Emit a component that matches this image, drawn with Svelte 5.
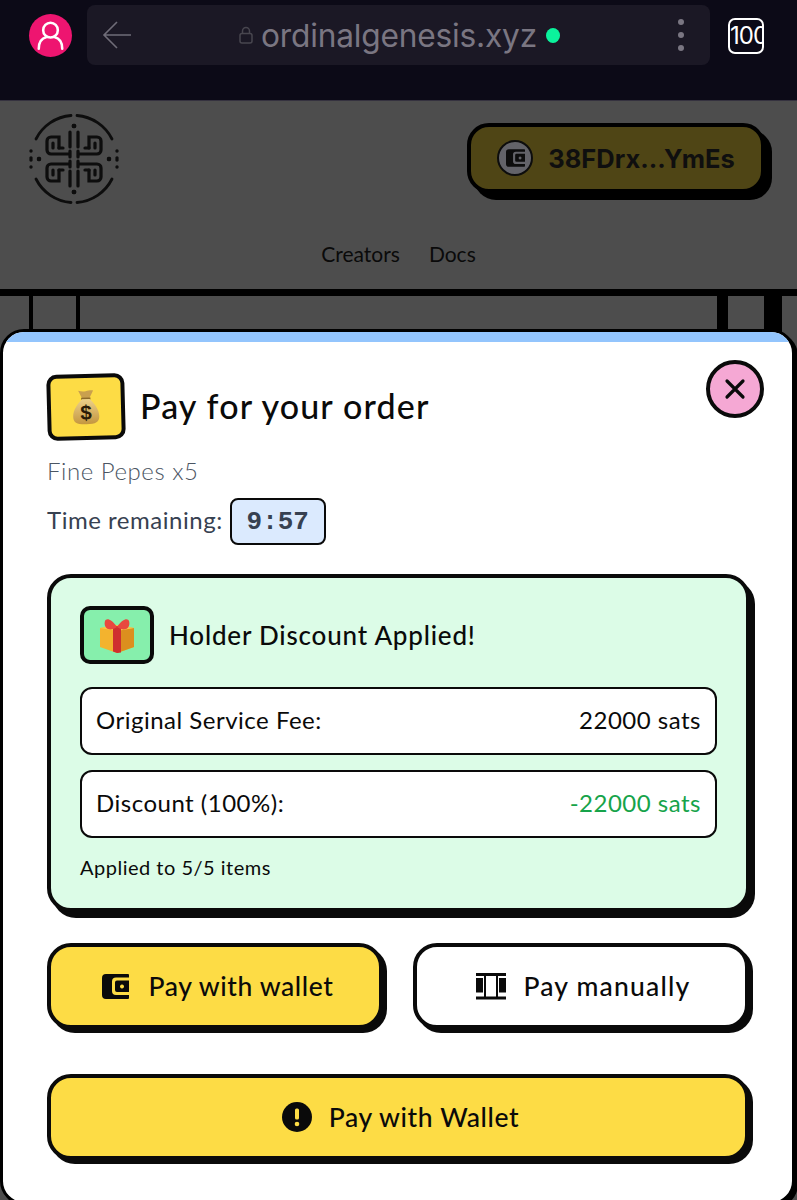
<script>
  const rows = [
    { label: 'Original Service Fee:', value: '22000 sats', green: false },
    { label: 'Discount (100%):', value: '-22000 sats', green: true }
  ];
</script>

<div class="screen">
  <header class="browser">
    <div class="avatar">
      <svg viewBox="0 0 44 44" width="44" height="44" fill="none" stroke="#fff" stroke-width="2.6" stroke-linecap="round">
        <circle cx="22" cy="16" r="7.500"/>
        <path d="M10 35c0-8 4-11 8-12M34 35c0-8-4-11-8-12"/>
      </svg>
    </div>
    <div class="urlbar">
      <svg class="back" viewBox="0 0 30 28" width="30" height="28" fill="none" stroke="#6f6c78" stroke-width="1.6">
        <path d="M15 1 2 14l13 13M2 14h27"/>
      </svg>
      <div class="url">
        <svg viewBox="0 0 14 18" width="14" height="18" fill="none" stroke="#48464f" stroke-width="1.5">
          <rect x="1" y="7.500" width="12" height="9.500" rx="2"/>
          <path d="M3.500 7.500V5a3.500 3.500 0 0 1 7 0v2.500"/>
        </svg>
        <span class="domain">ordinalgenesis.xyz</span>
        <span class="live"></span>
      </div>
      <div class="dots"><i></i><i></i><i></i></div>
    </div>
    <div class="tabs">100</div>
  </header>

  <section class="site">
    <div class="site-top">
      <svg class="logo" viewBox="-50 -50 100 100" width="100" height="100" fill="none" stroke="#0d0d0d" stroke-width="3.200" stroke-linecap="round">
        <defs>
          <g id="quad">
            <path d="M-15-11V-22H-23a4 4 0 0 0-4 4V-9a4 4 0 0 0 4 4H-5"/>
            <path d="M-21-16V-11"/>
            <path d="M-4-27V-12M-4-8V-2"/>
            <path d="M-15-11h4"/>
            <path d="M-38-20A43 43 0 0 1-3-43.500" stroke-width="2.800"/>
            <circle cx="0" cy="-33" r="2.300" fill="#0d0d0d" stroke="none"/>
            <circle cx="-43" cy="-8" r="1.700" fill="#0d0d0d" stroke="none"/>
            <circle cx="-43" cy="-1" r="1.700" fill="#0d0d0d" stroke="none"/>
            <circle cx="-35" cy="0" r="2.200" fill="#0d0d0d" stroke="none"/>
          </g>
        </defs>
        <use href="#quad"/>
        <use href="#quad" transform="scale(-1 1)"/>
        <use href="#quad" transform="scale(1 -1)"/>
        <use href="#quad" transform="scale(-1 -1)"/>
      </svg>
      <button class="connect">
        <span class="connect-icon">
          <svg viewBox="0 0 27 25" width="19" height="18"><path fill="#0d0d0d" fill-rule="evenodd" d="M4 0H26a1 1 0 0 1 1 1V3.500H14a4 4 0 0 0-4 4V17a4 4 0 0 0 4 4H27V24a1 1 0 0 1-1 1H4a4 4 0 0 1-4-4V4a4 4 0 0 1 4-4ZM15 6.500H27V18H15a2 2 0 0 1-2-2V8.500a2 2 0 0 1 2-2ZM20 10.500a2 2 0 1 0 .01 0Z"/></svg>
        </span>
        38FDrx...YmEs
      </button>
    </div>
    <nav class="nav"><span>Creators</span><span>Docs</span></nav>
  </section>

  <div class="rule"></div>
  <div class="behind">
    <div class="behind-left"><i></i><i></i></div>
    <div class="behind-right"><i class="a"></i><i class="b"></i></div>
  </div>

  <div class="modal">
    <div class="strip"></div>
    <button class="close" aria-label="Close">
      <svg viewBox="0 0 24 24" width="24" height="24" fill="none" stroke="#0a0a0a" stroke-width="3.200" stroke-linecap="round"><path d="M4 4l16 16M20 4 4 20"/></svg>
    </button>
    <div class="content">
      <div class="title-row">
        <div class="emoji-box money">
          <svg viewBox="0 0 30 38" width="28" height="36">
            <defs>
              <linearGradient id="bag" x1="0" y1="0" x2="0" y2="1"><stop offset="0" stop-color="#ecd08a"/><stop offset="1" stop-color="#c4963f"/></linearGradient>
            </defs>
            <path fill="#c9a04e" d="M7 1.500c3 .6 5 1.300 8 .6 3-.7 6-1.300 8-.6l-4 8h-8Z"/>
            <path fill="#8c6a2a" d="M10 9h10v2H10Z"/>
            <path fill="url(#bag)" d="M11 10.500h8c4 3.500 10 11 10 18.500 0 6.500-4 8.500-14 8.500S1 35.500 1 29c0-7.500 6-15 10-18.500Z"/>
            <text x="15" y="32.500" text-anchor="middle" class="dollar">$</text>
          </svg>
        </div>
        <h1>Pay for your order</h1>
      </div>
      <p class="sub">Fine Pepes x5</p>
      <div class="time">
        <span class="time-label">Time remaining:</span>
        <span class="timer">9:57</span>
      </div>

      <div class="card">
        <div class="card-head">
          <div class="emoji-box gift">
            <svg viewBox="0 0 36 35" width="36" height="35">
              <path fill="#f3b32e" d="M1 10 18 7l17 3v19L18 35 1 29Z"/>
              <path fill="#dc8f1e" d="M18 12v23l17-6V10Z"/>
              <path fill="#f7c94a" d="M1 10 18 7l17 3-17 3Z"/>
              <path fill="#cf2f2f" d="M14 8h8v26.500L18 35l-4-1.500Z"/>
              <path fill="#e8483f" d="M18 9C12 0 7 0 6 3c-1 3 0 7 3 8 3 1 6 0 9-2 3 2 6 3 9 2 3-1 4-5 3-8-1-3-6-3-12 6Z"/>
            </svg>
          </div>
          <h2>Holder Discount Applied!</h2>
        </div>
        <div class="rows">
          {#each rows as row}
            <div class="row">
              <span>{row.label}</span>
              <span class:green={row.green}>{row.value}</span>
            </div>
          {/each}
        </div>
        <p class="applied">Applied to 5/5 items</p>
      </div>

      <div class="choice">
        <button class="btn yellow wallet">
          <svg viewBox="0 0 27 25" width="27" height="25"><path fill="#0a0a0a" fill-rule="evenodd" d="M4 0H26a1 1 0 0 1 1 1V3.500H14a4 4 0 0 0-4 4V17a4 4 0 0 0 4 4H27V24a1 1 0 0 1-1 1H4a4 4 0 0 1-4-4V4a4 4 0 0 1 4-4ZM15 6.500H27V18H15a2 2 0 0 1-2-2V8.500a2 2 0 0 1 2-2ZM20 10.500a2 2 0 1 0 .01 0Z"/></svg>
          Pay with wallet
        </button>
        <button class="btn white">
          <svg viewBox="0 0 30 27" width="30" height="27" fill="#0a0a0a">
            <rect y="0" width="30" height="3"/>
            <rect y="23.500" width="30" height="3"/>
            <rect y="5" width="7" height="14.500"/>
            <rect x="23" y="5" width="7" height="14.500"/>
            <rect x="8" y="3" width="2" height="21"/>
            <rect x="20" y="3" width="2" height="21"/>
          </svg>
          Pay manually
        </button>
      </div>
      <button class="btn yellow full">
        <svg viewBox="0 0 30 30" width="30" height="30">
          <circle cx="15" cy="15" r="15" fill="#0a0a0a"/>
          <rect x="13" y="6.500" width="4" height="11" rx="1.500" fill="#fddc45"/>
          <circle cx="15" cy="22" r="2.300" fill="#fddc45"/>
        </svg>
        Pay with Wallet
      </button>
    </div>
  </div>
</div>

<style>
  :global(body) { margin: 0; background: #4d4d4d; }
  .screen {
    position: relative;
    width: 797px;
    height: 1200px;
    overflow: hidden;
    background: #4d4d4d;
    font-family: Lato, "Noto Sans", sans-serif;
    color: #0a0a0a;
  }
  .browser {
    box-sizing: border-box;
    height: 101px;
    background: #0c0a17;
    border-bottom: 1px solid #35323f;
    display: flex;
    align-items: flex-start;
    padding: 5px 0 0 29px;
  }
  .avatar {
    width: 43px;
    height: 43px;
    margin-top: 9px;
    border-radius: 50%;
    background: #ee1570;
    display: flex;
    align-items: center;
    justify-content: center;
    flex: none;
  }
  .urlbar {
    box-sizing: border-box;
    width: 623px;
    height: 60px;
    margin-left: 15px;
    background: #1b1825;
    border-radius: 8px;
    display: flex;
    align-items: center;
    padding-left: 15px;
    flex: none;
  }
  .back { flex: none; }
  .url {
    margin-left: 107px;
    display: flex;
    align-items: center;
    width: 330px;
    flex: none;
  }
  .domain {
    margin-left: 8px;
    font: 400 31.700px Inter, sans-serif;
    color: #7a7682;
    white-space: nowrap;
    letter-spacing: -0.2px;
  }
  .live {
    width: 14px;
    height: 15px;
    border-radius: 50%;
    background: #0bf29c;
    margin-left: 9px;
    flex: none;
  }
  .dots {
    margin-left: 109px;
    display: flex;
    flex-direction: column;
    gap: 7px;
  }
  .dots i { display: block; width: 6px; height: 6px; border-radius: 50%; background: #7a7682; }
  .tabs {
    box-sizing: border-box;
    width: 36px;
    height: 36px;
    margin: 13px 0 0 18px;
    border: 2px solid #fff;
    border-radius: 7px;
    color: #fff;
    font: 400 24px/32px Inter, sans-serif;
    letter-spacing: -1px;
    overflow: hidden;
    white-space: nowrap;
    flex: none;
  }
  .site {
    box-sizing: border-box;
    height: 188px;
    padding: 8px 32px 0 24px;
  }
  .site-top { display: flex; justify-content: space-between; align-items: flex-start; }
  .logo { flex: none; }
  .connect {
    box-sizing: border-box;
    margin-top: 14px;
    width: 298px;
    height: 70px;
    background: #4f4515;
    border: 4px solid #000;
    border-radius: 22px;
    box-shadow: 7px 7px 0 #000;
    display: flex;
    align-items: center;
    justify-content: center;
    gap: 15px;
    font: 700 25.500px Inter, sans-serif;
    color: #0f0f0f;
    padding: 0;
  }
  .connect-icon {
    box-sizing: border-box;
    width: 36px;
    height: 36px;
    border-radius: 50%;
    background: #636369;
    border: 2px solid #0d0d0d;
    display: flex;
    align-items: center;
    justify-content: center;
  }
  .nav {
    display: flex;
    justify-content: center;
    gap: 29px;
    margin-top: 32px;
    padding-left: 8px;
    font-size: 21px;
    line-height: 26px;
  }
  .rule { height: 7px; background: #000; }
  .behind { display: flex; justify-content: space-between; height: 60px; }
  .behind-left { display: flex; padding-left: 29px; gap: 43px; }
  .behind-left i { width: 4px; background: #000; }
  .behind-right { display: flex; padding-right: 15px; gap: 36px; }
  .behind-right i { background: #000; }
  .behind-right .a { width: 11px; }
  .behind-right .b { width: 18px; }

  .modal {
    position: absolute;
    left: 0;
    top: 329px;
    box-sizing: border-box;
    width: 795px;
    height: 876px;
    background: #fff;
    border: 3px solid #000;
    border-radius: 24px;
    box-shadow: 3px 3px 0 #000;
    overflow: hidden;
  }
  .strip { height: 10px; background: #93c5fd; }
  .close {
    position: absolute;
    right: 28px;
    top: 28px;
    box-sizing: border-box;
    width: 58px;
    height: 58px;
    padding: 0;
    border-radius: 50%;
    background: #f5a8d4;
    border: 4px solid #0a0a0a;
    display: flex;
    align-items: center;
    justify-content: center;
  }
  .content { padding: 32px 41px 0 44px; }
  .title-row { display: flex; align-items: center; gap: 15px; }
  .emoji-box {
    box-sizing: border-box;
    border: 4px solid #0a0a0a;
    border-radius: 10px;
    display: flex;
    align-items: center;
    justify-content: center;
    flex: none;
  }
  .money { width: 78px; height: 66px; background: #fddc45; transform: rotate(-1.500deg); }
  .gift { width: 74px; height: 58px; background: #86efac; }
  .dollar { font: 700 22px "Liberation Sans", sans-serif; fill: #2a1c08; }
  h1 { margin: 0; padding-bottom: 2px; font-size: 34px; line-height: 44px; font-weight: 500; letter-spacing: 1.150px; }
  .sub { margin: 15px 0 0; font-size: 24px; line-height: 32px; font-weight: 300; color: #4b5563; letter-spacing: .55px; }
  .time {
    margin-top: 11px;
    display: flex;
    align-items: center;
    gap: 7px;
    font-size: 24px;
    color: #374151;
    letter-spacing: .53px;
  }
  .time-label { padding-bottom: 4px; }
  .timer {
    box-sizing: border-box;
    width: 96px;
    height: 47px;
    background: #dbeafe;
    border: 2px solid #0a0a0a;
    border-radius: 8px;
    display: flex;
    align-items: center;
    justify-content: center;
    font: 700 26px "Liberation Mono", monospace;
    letter-spacing: 0;
  }
  .card {
    box-sizing: border-box;
    margin-top: 29px;
    width: 703px;
    height: 338px;
    background: #dcfce7;
    border: 4px solid #0a0a0a;
    border-radius: 24px;
    box-shadow: 5px 6px 0 #0a0a0a;
    padding: 28px 29px 0;
  }
  .card-head { display: flex; align-items: center; gap: 15px; }
  h2 { margin: 0; font-size: 26px; line-height: 34px; font-weight: 500; letter-spacing: .8px; }
  .rows { margin-top: 23px; display: flex; flex-direction: column; gap: 15px; }
  .row {
    box-sizing: border-box;
    height: 68px;
    background: #fff;
    border: 2px solid #0a0a0a;
    border-radius: 12px;
    padding: 0 14px 4px;
    display: flex;
    justify-content: space-between;
    align-items: center;
    font-size: 24px;
    letter-spacing: .5px;
  }
  .green { color: #16a34a; }
  .applied { margin: 15px 0 0; font-size: 20px; line-height: 28px; letter-spacing: .5px; }
  .choice {
    margin-top: 31px;
    display: grid;
    grid-template-columns: 336px 336px;
    gap: 30px;
  }
  .btn {
    box-sizing: border-box;
    height: 86px;
    border: 4px solid #0a0a0a;
    border-radius: 24px;
    box-shadow: 4px 4px 0 #0a0a0a;
    display: flex;
    align-items: center;
    justify-content: center;
    gap: 17px;
    font-family: inherit;
    font-size: 26.500px;
    font-weight: 500;
    letter-spacing: .6px;
    color: #0a0a0a;
    padding: 0 0 0 5px;
  }
  .wallet { gap: 20px; }
  .yellow { background: #fddc45; }
  .white { background: #fff; letter-spacing: 1.200px; }
  .full { width: 702px; margin-top: 45px; }
</style>
